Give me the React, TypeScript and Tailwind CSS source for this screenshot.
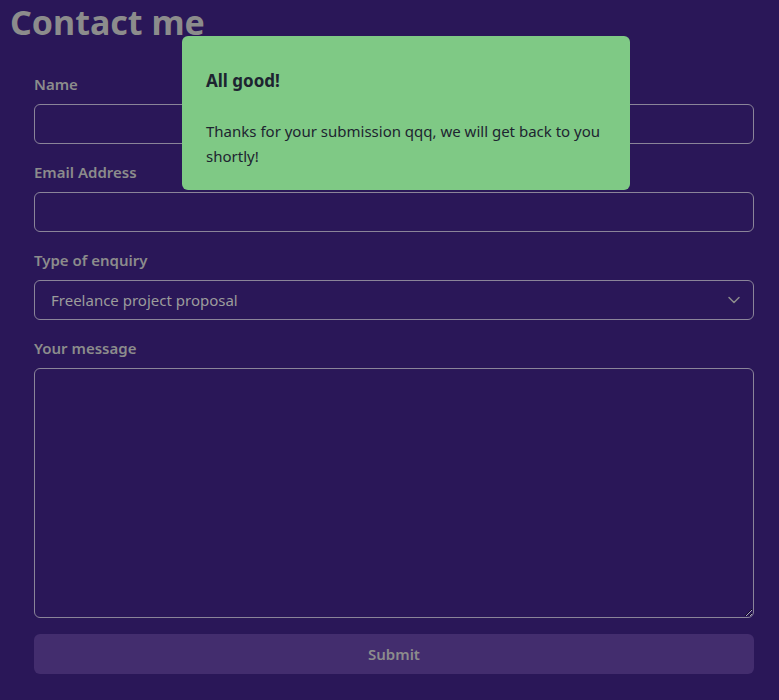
import { ChevronDown } from "lucide-react";

const labelClass = "block text-[15px] leading-6 font-semibold text-[#8c8c8c] mb-2";
const fieldClass =
  "block w-full h-10 rounded-md border border-[#8a8499] bg-transparent px-4 text-[15px] text-[#9c9c9c] outline-none";

const Toast = () => (
  <div className="absolute left-[182px] top-[36px] w-[448px] h-[154px] rounded-md bg-[#7fc985] px-6 pt-[33px] text-[#1d2430]">
    <p className="text-[17px] leading-6 font-bold">All good!</p>
    <p className="mt-[26px] text-[15px] leading-[25px]">
      Thanks for your submission qqq, we will get back to you shortly!
    </p>
  </div>
);

export default function App() {
  return (
    <div
      className="relative min-h-[700px] bg-[#2a1758] px-[10px]"
      style={{ fontFamily: "'Noto Sans', 'Open Sans', sans-serif" }}
    >
      <h1 className="text-[34px] leading-[44px] font-bold text-[#8c8c8c]">Contact me</h1>
      <form className="pt-[28px] pl-6 pr-[15px]" onSubmit={(e) => e.preventDefault()}>
        <div className="mb-4">
          <label className={labelClass}>Name</label>
          <input type="text" className={fieldClass} />
        </div>
        <div className="mb-4">
          <label className={labelClass}>Email Address</label>
          <input type="email" className={fieldClass} />
        </div>
        <div className="mb-4">
          <label className={labelClass}>Type of enquiry</label>
          <div className="relative">
            <select className={`${fieldClass} appearance-none`}>
              <option>Freelance project proposal</option>
            </select>
            <ChevronDown
              className="pointer-events-none absolute right-[10px] top-[10px] text-[#8c8c8c]"
              size={20}
              strokeWidth={1.8}
            />
          </div>
        </div>
        <div className="mb-4">
          <label className={labelClass}>Your message</label>
          <textarea className="block w-full h-[250px] rounded-md border border-[#8a8499] bg-transparent px-4 py-2 text-[15px] text-[#9c9c9c] outline-none" />
        </div>
        <button
          type="submit"
          className="block w-full h-10 rounded-md bg-[#432d6e] text-[15px] font-semibold text-[#8c8c8c]"
        >
          Submit
        </button>
      </form>
      <Toast />
    </div>
  );
}
